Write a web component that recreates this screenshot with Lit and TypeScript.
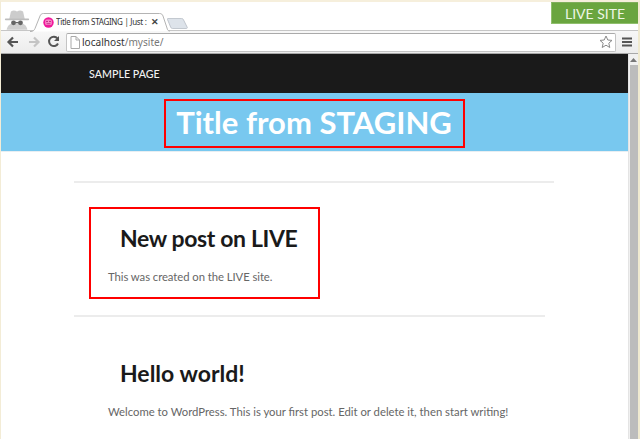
import { LitElement, html, css } from "lit";
import { customElement } from "lit/decorators.js";

@customElement("app-root")
export class AppRoot extends LitElement {
  static styles = css`
    :host { display: block; width: 640px; height: 439px; overflow: hidden; font-family: Lato, "Liberation Sans", sans-serif; }
    * { box-sizing: border-box; }
    .window { position: relative; width: 640px; height: 439px; background: #fff; border-top: 2px solid #f6efdc; border-left: 1px solid #f3ecd6; border-right: 2px solid #f0ead0; display: flex; flex-direction: column; overflow: hidden; }
    .tabs { height: 29px; flex: none; display: flex; align-items: flex-end; background: #fff; position: relative; border-bottom: 1px solid #c6c6c6; }
    .incognito { width: 26px; height: 23px; margin-left: 3px; flex: none; align-self: flex-end; }
    .tab-shape { width: 140px; height: 18px; margin-left: 0; margin-bottom: -1px; position: relative; flex: none; display: flex; align-items: center; font-family: "Noto Sans", "Liberation Sans", sans-serif; color: #333; }
    .tab-shape svg.bg { position: absolute; left: 0; top: 0; }
    .fav { position: relative; margin-left: 13px; width: 11px; height: 11px; flex: none; }
    .tab-title { position: relative; margin-left: 2px; width: 92px; flex: none; white-space: nowrap; overflow: hidden; font-size: 8px; letter-spacing: -0.3px; line-height: 14px; }
    .tab-x { position: relative; margin-left: 3px; font: bold 9px "Liberation Sans", sans-serif; color: #444; }
    .newtab { width: 22px; height: 11px; flex: none; margin-left: -3px; margin-bottom: 1px; }
    .live { position: absolute; top: 0; right: 0; width: 87px; height: 22px; background: #6aa53f; border: 1px solid #8fbf6c; border-top: 1px solid #7fae5c; border-right: none; color: #eef5e6; font: 14px Lato, sans-serif; display: flex; align-items: center; justify-content: center; }
    .toolbar { height: 23px; flex: none; background: linear-gradient(#f7f7f7, #ececec); display: flex; align-items: center; padding-left: 4px; border-bottom: 1px solid #a8a8a8; }
    .nav-btn { width: 18px; height: 16px; flex: none; margin-right: 2px; display: block; }
    .omni { flex: 1; height: 19px; margin-left: 1px; background: #fff; border: 1px solid #c4c4c4; border-top-color: #aaa; border-radius: 2px; display: flex; align-items: center; font: 10.1px "Noto Sans", "Liberation Sans", sans-serif; color: #777; padding-left: 3px; }
    .omni b { font-weight: 400; color: #333; }
    .doc { margin-right: 2px; flex: none; }
    .star { margin-left: auto; margin-right: 2px; flex: none; }
    .menu { width: 22px; flex: none; display: flex; justify-content: center; }
    .viewport { flex: 1; display: flex; min-height: 0; }
    .page { flex: 1; min-width: 0; position: relative; overflow: hidden; background: #fff; }
    .scrollbar { width: 10px; flex: none; background: #f0f0f0; border-left: 1px solid #e4e4e4; display: flex; flex-direction: column; align-items: stretch; }
    .arrow { height: 11px; flex: none; display: flex; justify-content: center; align-items: center; }
    .thumb { flex: 1; background: #bcbcbc; margin: 0 0 0 1px; }
    .topnav { height: 39px; background: #1a1a1a; color: #f2f2f2; font-size: 10.7px; font-weight: 500; display: flex; align-items: center; padding-left: 88px; }
    .hero { height: 59px; background: #78c8ef; border-bottom: 1px solid #e8eef2; color: #fff; font-size: 31px; font-weight: 700; display: flex; align-items: center; justify-content: center; padding-right: 1px; }
    .content { padding: 29px 0 0 73px; }
    .rule { height: 2px; background: #ececec; }
    .rule.one { width: 480px; }
    .rule.two { width: 471px; }
    .post { padding-left: 34px; }
    .post.first { height: 132px; padding-top: 40px; }
    .post.second { padding-top: 41px; }
    h2 { margin: 0; font-size: 23px; line-height: 30px; font-weight: 700; color: #1a1a1a; padding-left: 12px; }
    .first h2 { letter-spacing: -0.37px; }
    p { margin: 0; font-size: 11.3px; line-height: 18px; color: #666; }
    .first p { margin-top: 15px; letter-spacing: -0.06px; }
    .second p { margin-top: 15px; }
    .red { position: absolute; border: 2px solid #f00; pointer-events: none; }
    .red.a { left: 163px; top: 45px; width: 301px; height: 49px; }
    .red.b { left: 88px; top: 153px; width: 231px; height: 92px; }
  `;

  render() {
    return html`
      <div class="window">
        <div class="tabs">
          <svg class="incognito" viewBox="0 0 30 26">
            <path d="M3 26c1-5 4-7 8-8h8c4 1 7 3 8 8z" fill="#d0d0d0"/>
            <path d="M6 14l2-9c3-2 5-1 7 0 2-1 4-2 7 0l2 9z" fill="#cccccc"/>
            <rect x="1" y="13" width="28" height="2" rx="1" fill="#bdbdbd"/>
            <circle cx="11" cy="18" r="2.800" fill="#666"/><circle cx="19" cy="18" r="2.800" fill="#666"/>
            <rect x="13" y="17" width="4" height="1.200" fill="#666"/>
          </svg>
          <div class="tab-shape">
            <svg class="bg" width="140" height="19" viewBox="0 0 140 19">
              <path d="M0 18.500h1c2 0 3-1 4-3L10 3c.6-1.500 1.500-2.500 3.500-2.500h116c2 0 3 1 3.500 2.500l4 12c.5 2 1 3 3 3" fill="#fff" stroke="#b4b4b4"/>
            </svg>
            <svg class="fav" viewBox="0 0 11 11">
              <circle cx="5.500" cy="5.500" r="5.200" fill="#f0189c"/>
              <rect x="2.200" y="2.500" width="6.600" height="5.500" rx="1.500" fill="#fb8ccc"/>
              <circle cx="4" cy="4.500" r=".8" fill="#b01070"/><circle cx="7" cy="4.500" r=".8" fill="#b01070"/>
              <path d="M3.500 6.800h4" stroke="#b01070" stroke-width=".8"/>
            </svg>
            <span class="tab-title">Title from STAGING | Just :</span>
            <span class="tab-x">✕</span>
          </div>
          <svg class="newtab" viewBox="0 0 24 12">
            <path d="M1 .5h15c1 0 1.500.5 2 1.500l4 8c.3.800 0 1.500-1 1.500H6c-1 0-1.500-.5-2-1.500L.5 1.500C.3 1 .5.500 1 .5z" fill="#dde3ea" stroke="#bcc2c9"/>
          </svg>
          <div class="live">LIVE SITE</div>
        </div>
        <div class="toolbar">
          <svg class="nav-btn" viewBox="0 0 18 16"><path d="M13 8H4M8 3.500L3.500 8 8 12.500" fill="none" stroke="#555" stroke-width="2.200"/></svg>
          <svg class="nav-btn" viewBox="0 0 18 16"><path d="M4 8h9M9 3.500L13.500 8 9 12.500" fill="none" stroke="#c4c4c4" stroke-width="2.200"/></svg>
          <svg class="nav-btn" viewBox="0 0 18 16"><path d="M13 9.500A4.700 4.700 0 1 1 12.500 4.500" fill="none" stroke="#555" stroke-width="2"/><path d="M14 2v5h-5z" fill="#555"/></svg>
          <div class="omni">
            <svg class="doc" width="10" height="13" viewBox="0 0 10 13"><path d="M1 .5h5l3.500 3.500v8.500H1z M6 .5V4h3.500" fill="#fff" stroke="#aaa"/></svg>
            <span><b>localhost</b>/mysite/</span>
            <svg class="star" width="14" height="14" viewBox="0 0 14 14"><path d="M7 1l1.800 4 4.200.4-3.200 2.800 1 4.300L7 10.200 3.200 12.500l1-4.300L1 5.400 5.200 5z" fill="#fff" stroke="#8a8a8a"/></svg>
          </div>
          <div class="menu"><svg width="10" height="10" viewBox="0 0 10 10"><path d="M0 1.500h10M0 5h10M0 8.500h10" stroke="#555" stroke-width="2"/></svg></div>
        </div>
        <div class="viewport">
          <div class="page">
            <div class="topnav">SAMPLE PAGE</div>
            <div class="hero">Title from STAGING</div>
            <div class="content">
              <div class="rule one"></div>
              <div class="post first">
                <h2>New post on LIVE</h2>
                <p>This was created on the LIVE site.</p>
              </div>
              <div class="rule two"></div>
              <div class="post second">
                <h2>Hello world!</h2>
                <p>Welcome to WordPress. This is your first post. Edit or delete it, then start writing!</p>
              </div>
            </div>
            <div class="red a"></div>
            <div class="red b"></div>
          </div>
          <div class="scrollbar">
            <div class="arrow"><svg width="7" height="4" viewBox="0 0 7 4"><path d="M3.500 0L7 4H0z" fill="#777"/></svg></div>
            <div class="thumb"></div>
          </div>
        </div>
      </div>
    `;
  }
}
